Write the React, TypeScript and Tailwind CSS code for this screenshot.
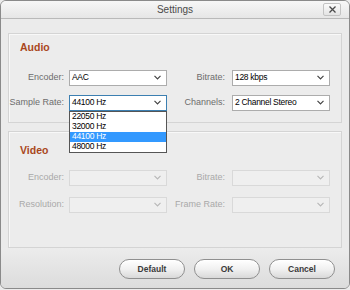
import { ReactElement } from "react";

interface SelectProps {
  value?: string;
  disabled?: boolean;
  focused?: boolean;
  width: string;
}

const Chevron = ({ disabled }: { disabled?: boolean }): ReactElement => (
  <svg width="7" height="5" viewBox="0 0 7 5" className="shrink-0">
    <path
      d="M0.5 0.8 L3.5 3.8 L6.5 0.8"
      fill="none"
      stroke={disabled ? "#b8b8b8" : "#444"}
      strokeWidth="1.2"
    />
  </svg>
);

const Select = ({ value, disabled, focused, width }: SelectProps): ReactElement => {
  const border = focused
    ? "border-[#3c7fb1]"
    : disabled
    ? "border-[#d9d9d9]"
    : "border-[#acacac]";
  return (
    <div
      className={`${width} h-[16px] flex items-center justify-between pl-[2px] pr-[5px] border ${border} ${
        disabled ? "bg-[#efefef]" : "bg-white"
      }`}
    >
      <span className="text-[8.5px] tracking-[-0.3px] leading-none text-black">{value}</span>
      <Chevron disabled={disabled} />
    </div>
  );
};

const Label = ({
  text,
  width,
  gap,
  disabled,
}: {
  text: string;
  width: string;
  gap: string;
  disabled?: boolean;
}): ReactElement => (
  <span
    className={`${width} ${gap} text-right text-[9px] leading-none whitespace-nowrap ${
      disabled ? "text-[#a9a9a9]" : "text-[#6d6d6d]"
    }`}
  >
    {text}
  </span>
);

const Button = ({ text }: { text: string }): ReactElement => (
  <button className="w-[66px] h-[20px] rounded-full border border-[#8f8f8f] bg-gradient-to-b from-white via-[#f1f1f1] to-[#d9d9d9] shadow-[inset_0_1px_0_#ffffff] text-[8.5px] font-bold text-[#3a3a3a] flex items-center justify-center">
    {text}
  </button>
);

const sampleRates = ["22050 Hz", "32000 Hz", "44100 Hz", "48000 Hz"];

const App = (): ReactElement => {
  return (
    <div
      className="w-[350px] h-[290px] bg-[#ebebeb] flex flex-col overflow-hidden"
      style={{ fontFamily: '"Liberation Sans", Arial, sans-serif' }}
    >
      <div className="w-[350px] h-[289px] border border-[#8a8a8a] rounded-[6px] flex flex-col overflow-hidden bg-[#ebebeb]">
        {/* title bar */}
        <div className="relative h-[18px] shrink-0 border-b border-[#b9b9b9] bg-gradient-to-b from-[#f7f7f7] to-[#e6e6e6] flex items-center justify-center">
          <span className="text-[10px] text-[#4a4a4a]">Settings</span>
          <div className="absolute right-[8px] top-[2px] w-[18px] h-[13px] border border-[#c3c3c3] bg-gradient-to-b from-[#fafafa] to-[#e4e4e4] rounded-[2px] flex items-center justify-center">
            <svg width="7" height="7" viewBox="0 0 7 7">
              <path d="M0.5 0.5 L6.5 6.5 M6.5 0.5 L0.5 6.5" stroke="#4a4a4a" strokeWidth="1.3" />
            </svg>
          </div>
        </div>

        {/* body */}
        <div className="flex flex-col gap-[8px] pl-[7px] pr-[7px] pt-[14px]">
          {/* audio panel */}
          <div className="relative h-[90px] border border-[#d4d4d4] shadow-[inset_1px_1px_0_#f8f8f8] bg-[#ececec] flex flex-col">
            <span className="ml-[11px] mt-[8px] text-[10.5px] font-bold leading-none text-[#a9471c]">
              Audio
            </span>
            <div className="flex items-center mt-[17px]">
              <Label text="Encoder:" width="w-[55px]" gap="mr-[5px]" />
              <Select value="AAC" width="w-[98px]" />
              <Label text="Bitrate:" width="w-[58px]" gap="mr-[7px]" />
              <Select value="128 kbps" width="w-[98px]" />
            </div>
            <div className="flex items-center mt-[9px]">
              <Label text="Sample Rate:" width="w-[55px]" gap="mr-[5px]" />
              <div className="relative">
                <Select value="44100 Hz" width="w-[98px]" focused />
                <div className="absolute z-10 left-0 top-[16px] w-[98px] border border-[#555] bg-white flex flex-col">
                  {sampleRates.map((r) => (
                    <div
                      key={r}
                      className={`h-[10px] pl-[2px] flex items-center text-[8.5px] tracking-[-0.3px] leading-none ${
                        r === "44100 Hz" ? "bg-[#3399ff] text-white" : "text-black"
                      }`}
                    >
                      {r}
                    </div>
                  ))}
                </div>
              </div>
              <Label text="Channels:" width="w-[58px]" gap="mr-[7px]" />
              <Select value="2 Channel Stereo" width="w-[98px]" />
            </div>
          </div>

          {/* video panel */}
          <div className="h-[117px] border border-[#d4d4d4] shadow-[inset_1px_1px_0_#f8f8f8] bg-[#ececec] flex flex-col">
            <span className="ml-[11px] mt-[13px] text-[10.5px] font-bold leading-none text-[#a9471c]">
              Video
            </span>
            <div className="flex items-center mt-[14px]">
              <Label text="Encoder:" width="w-[55px]" gap="mr-[5px]" disabled />
              <Select width="w-[98px]" disabled />
              <Label text="Bitrate:" width="w-[58px]" gap="mr-[7px]" disabled />
              <Select width="w-[98px]" disabled />
            </div>
            <div className="flex items-center mt-[11px]">
              <Label text="Resolution:" width="w-[55px]" gap="mr-[5px]" disabled />
              <Select width="w-[98px]" disabled />
              <Label text="Frame Rate:" width="w-[58px]" gap="mr-[7px]" disabled />
              <Select width="w-[98px]" disabled />
            </div>
          </div>
        </div>

        {/* footer */}
        <div className="flex-1 bg-gradient-to-b from-[#ececec] to-[#dcdcdc] flex items-start justify-end gap-[9px] pr-[14px] pt-[11px]">
          <Button text="Default" />
          <Button text="OK" />
          <Button text="Cancel" />
        </div>
      </div>
    </div>
  );
};

export default App;
